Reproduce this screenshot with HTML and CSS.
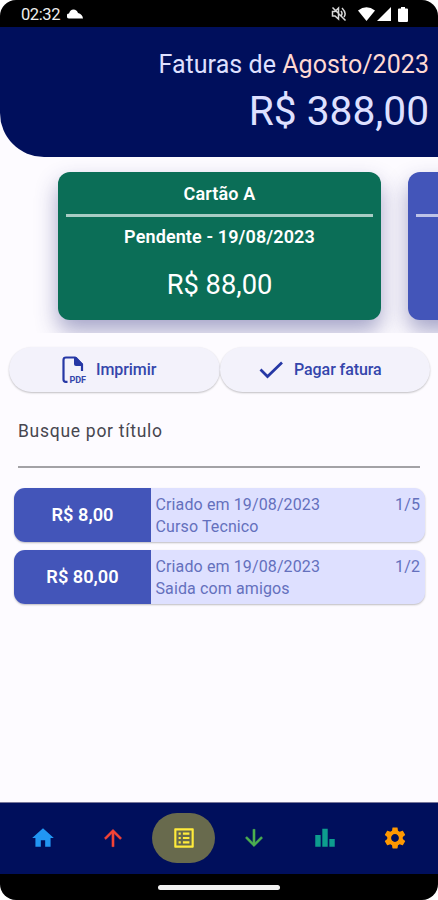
FILE: index.html
```html
<!DOCTYPE html>
<html lang="pt-BR">
<head>
<meta charset="utf-8">
<title>Faturas</title>
<link rel="stylesheet" href="styles.css">
</head>
<body>
<div class="phone">
  <div class="status">
    <span class="clock">02:32</span>
    <svg class="cloud" viewBox="0 0 16 10"><path d="M2.500 9.500A2.500 2.500 0 0 1 2 4.500Q3.200.5 6.500.5T11 4Q15.500 5 16 9.500Z"/></svg>
    <svg class="mute" viewBox="0 0 16 16"><path d="M1.500 5.500h2.500l3.500-3.500v11l-3.500-3h-2.500zM10 5q2 2.500 0 5M11 2q5 5 2 9M1.500 1.500l13 13" fill="none" stroke="#d8d8d8" stroke-width="1.500"/></svg>
    <svg class="wifi" viewBox="0 0 17 14"><path d="M0 3.500Q8.500-3 17 3.500L8.500 14Z"/></svg>
    <svg class="signal" viewBox="0 0 14 14"><path d="M14 0V14H0Z"/></svg>
    <svg class="battery" viewBox="0 0 10 15"><path d="M3 0h4v1.500h2q1 0 1 1v11q0 1.500-1 1.500h-8q-1 0-1-1.500v-11q0-1 1-1h2z"/></svg>
  </div>
  <header class="summary">
    <div class="period">Faturas de <span class="month">Agosto/2023</span></div>
    <div class="total">R$ 388,00</div>
  </header>
  <main class="content">
    <section class="carousel">
      <article class="card green">
        <h2 class="card-name">Cartão A</h2>
        <div class="rule"></div>
        <div class="card-status">Pendente - 19/08/2023</div>
        <div class="card-value">R$ 88,00</div>
      </article>
      <article class="card blue">
        <h2 class="card-name"></h2>
        <div class="rule"></div>
      </article>
    </section>
    <div class="actions">
      <button class="action print">
        <svg class="pdf" viewBox="0 0 25 28"><path d="M5.500 25.800H3.800Q1.500 25.800 1.500 23.500V4Q1.500 1.500 4 1.500H13L20 8.500V15" fill="none" stroke="#2638a5" stroke-width="2.200"/><path d="M12 1h2.500l6.500 7v2h-7q-2 0-2-2z" fill="#2638a5"/><text x="7.500" y="26.500" textLength="16.500" lengthAdjust="spacingAndGlyphs">PDF</text></svg>
        <span class="print-label">Imprimir</span>
      </button>
      <button class="action pay">
        <svg class="check" viewBox="0 0 25 18"><path d="M1.500 8.500l7 7L23 1.500" fill="none" stroke="#2638a5" stroke-width="2.700"/></svg>
        <span class="pay-label">Pagar fatura</span>
      </button>
    </div>
    <div class="search">Busque por título</div>
    <ul class="entries">
      <li class="entry">
        <div class="amount">R$ 8,00</div>
        <div class="info"><div class="line"><span>Criado em 19/08/2023</span><span>1/5</span></div><div class="title">Curso Tecnico</div></div>
      </li>
      <li class="entry">
        <div class="amount">R$ 80,00</div>
        <div class="info"><div class="line"><span>Criado em 19/08/2023</span><span>1/2</span></div><div class="title">Saida com amigos</div></div>
      </li>
    </ul>
  </main>
  <nav class="tabs">
    <span class="tab"><svg viewBox="0 0 24 24" fill="#2196f3"><path d="M10 20v-6h4v6h5v-8h3L12 3 2 12h3v8z"/></svg></span>
    <span class="tab"><svg viewBox="0 0 24 24" fill="#f44336" stroke="#f44336" stroke-width=".4"><path d="M4 12l1.410 1.410L11 7.830V20h2V7.830l5.580 5.590L20 12l-8-8-8 8z"/></svg></span>
    <span class="tab active"><svg viewBox="0 0 24 24" fill="#ffeb3b"><path d="M19 5v14H5V5h14m1.100-2H3.900c-.5 0-.9.400-.9.900v16.200c0 .4.400.9.900.9h16.200c.4 0 .9-.5.900-.9V3.900c0-.5-.5-.9-.9-.9zM11 7h6v2h-6V7zm0 4h6v2h-6v-2zm0 4h6v2h-6zM7 7h2v2H7zm0 4h2v2H7zm0 4h2v2H7z"/></svg></span>
    <span class="tab"><svg viewBox="0 0 24 24" fill="#4caf50" stroke="#4caf50" stroke-width=".4"><path d="M20 12l-1.410-1.410L13 16.170V4h-2v12.170l-5.580-5.590L4 12l8 8 8-8z"/></svg></span>
    <span class="tab"><svg viewBox="0 0 24 24" fill="#0d9d8e"><path d="M3 9.200h5V20H3zM9.500 3.500h5V20h-5zM16 13h5v7h-5z"/></svg></span>
    <span class="tab"><svg viewBox="0 0 24 24" fill="#ff9800"><path d="M19.140 12.940c.04-.3.060-.61.060-.94 0-.32-.02-.64-.07-.94l2.030-1.580c.18-.14.230-.41.120-.61l-1.920-3.320c-.12-.22-.37-.29-.59-.22l-2.390.96c-.5-.38-1.030-.7-1.620-.94l-.36-2.540c-.04-.24-.24-.41-.48-.41h-3.840c-.24 0-.43.170-.47.410l-.36 2.540c-.59.240-1.130.57-1.620.94l-2.390-.96c-.22-.08-.47 0-.59.220L2.740 8.870c-.12.210-.08.470.120.610l2.030 1.580c-.05.300-.09.630-.09.940s.020.640.070.940l-2.030 1.580c-.18.140-.23.410-.12.610l1.920 3.320c.12.220.37.290.59.220l2.390-.96c.5.380 1.030.7 1.620.94l.36 2.540c.05.240.24.410.48.410h3.840c.24 0 .44-.17.470-.41l.36-2.540c.59-.24 1.130-.56 1.620-.94l2.390.96c.22.080.47 0 .59-.22l1.920-3.320c.12-.22.070-.47-.12-.61l-2.010-1.580zM12 15.600c-1.980 0-3.600-1.620-3.600-3.600s1.620-3.600 3.600-3.600 3.600 1.620 3.600 3.600-1.620 3.600-3.600 3.600z"/></svg></span>
  </nav>
  <div class="gesture"><span class="handle"></span></div>
</div>
</body>
</html>
```
FILE: styles.css
```css
* { box-sizing: border-box; }
body { margin: 0; background: #fff; font-family: Roboto, sans-serif; }
svg { display: block; flex: none; }
.phone { width: 438px; height: 900px; border-radius: 16px; overflow: hidden; background: #fdfbff; display: flex; flex-direction: column; }
.status { height: 27px; flex: none; background: #000; display: flex; align-items: center; padding: 1px 30px 0 21px; color: #eee; fill: #fff; }
.clock { font-size: 16.5px; line-height: 25px; letter-spacing: -.4px; }
.cloud { width: 16px; height: 10px; margin-left: 7px; }
.mute { width: 16px; height: 16px; margin-left: auto; }
.wifi { width: 17px; height: 14px; margin-left: 11px; }
.signal { width: 14px; height: 14px; margin-left: 2px; }
.battery { width: 10px; height: 15px; margin-left: 7px; }
.summary { height: 130px; flex: none; background: #000f5c; border-bottom-left-radius: 44px; padding: 21px 9px 0; text-align: right; color: #dee0ff; white-space: nowrap; }
.period { font-size: 25px; line-height: 34px; letter-spacing: .05px; }
.month { color: #ffd9d2; }
.total { font-size: 40.700px; line-height: 58px; }
.content { flex: 1; min-height: 0; }
.carousel { height: 176px; overflow: hidden; padding: 15px 0 0 58px; display: flex; gap: 27px; }
.card { flex: none; width: 323px; height: 148px; border-radius: 12px; padding: 0 8px; color: #fff; text-align: center; box-shadow: 0 11px 22px rgba(45, 45, 125, .42); }
.green { background: #0b6e57; }
.blue { background: #4355b9; }
.card-name { margin: 0; height: 42px; font-size: 18px; line-height: 43px; font-weight: 600; letter-spacing: .15px; }
.rule { height: 3px; background: rgba(255, 255, 255, .65); }
.card-status { font-size: 18px; line-height: 40px; font-weight: 600; letter-spacing: .12px; }
.card-value { font-size: 27.300px; line-height: 57px; }
.actions { display: flex; padding: 14px 8px 0 9px; }
.action { flex: none; width: 210.500px; height: 45px; border: 0; border-radius: 23px; background: #f3f2fb; box-shadow: 0 1px 2px rgba(0, 0, 0, .24); color: #3446ab; font: 500 16px/44px Roboto, sans-serif; display: flex; align-items: center; padding: 0; letter-spacing: -.08px; }
.print { padding-left: 53px; }
.pay { padding-left: 39.500px; }
.pdf { width: 25px; height: 28px; margin-right: 9px; }
.pdf text { font: 700 9px Roboto, sans-serif; fill: #3446ab; }
.check { width: 25px; height: 18px; margin-right: 10px; }
.search { margin: 26px 18px 0; height: 50px; border-bottom: 2px solid #a3a2a6; font-size: 17.500px; line-height: 26px; letter-spacing: .72px; color: #47464f; }
.entries { list-style: none; margin: 20px 13px 0 14px; padding: 0; display: flex; flex-direction: column; gap: 8px; }
.entry { height: 54px; border-radius: 11px; overflow: hidden; display: flex; background: #dee0ff; box-shadow: 0 1px 2px rgba(0, 0, 0, .25); }
.amount { width: 137px; background: #4355b9; color: #fff; font-size: 18.200px; font-weight: 600; line-height: 54px; text-align: center; }
.info { flex: 1; padding: 6px 5px 0 4.500px; color: #6470bd; font-size: 16px; line-height: 22px; letter-spacing: .12px; white-space: nowrap; }
.line { display: flex; justify-content: space-between; }
.tabs { height: 72px; flex: none; background: #000f5c; border-top: 1px solid #77769a; display: flex; justify-content: space-between; align-items: center; padding: 0 11px 2px; }
.tab { width: 63px; height: 50px; border-radius: 25px; display: flex; align-items: center; justify-content: center; }
.tab svg { width: 26px; height: 26px; }
.active { background: #686a4d; }
.gesture { height: 26px; flex: none; background: #000; display: flex; justify-content: center; padding-top: 10.500px; }
.handle { width: 122px; height: 5px; border-radius: 3px; background: #f2f2f2; }
```
